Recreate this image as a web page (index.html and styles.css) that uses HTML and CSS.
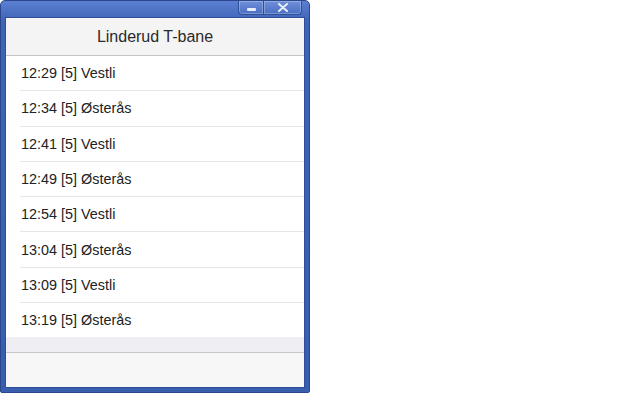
FILE: index.html
```html
<!DOCTYPE html>
<html>
<head>
<meta charset="utf-8">
<link rel="stylesheet" href="styles.css">
</head>
<body>
<div class="window">
  <div class="titlebar">
    <div class="controls">
      <div class="btn btn-min"><span class="min-glyph"></span></div>
      <div class="btn btn-close">
        <svg width="12" height="9" viewBox="0 0 12 9"><path d="M2 1 L10 8 M10 1 L2 8" stroke="#e8eef9" stroke-width="2" stroke-linecap="round"/></svg>
      </div>
    </div>
  </div>
  <div class="client">
    <div class="header">Linderud T-bane</div>
    <ul class="list">
      <li class="row">12:29 [5] Vestli</li>
      <li class="row">12:34 [5] Østerås</li>
      <li class="row">12:41 [5] Vestli</li>
      <li class="row">12:49 [5] Østerås</li>
      <li class="row">12:54 [5] Vestli</li>
      <li class="row">13:04 [5] Østerås</li>
      <li class="row">13:09 [5] Vestli</li>
      <li class="row">13:19 [5] Østerås</li>
    </ul>
    <div class="band"></div>
    <div class="footer"></div>
  </div>
</div>
</body>
</html>
```
FILE: styles.css
```css
html, body {
  margin: 0;
  padding: 0;
  background: #ffffff;
}
body {
  width: 640px;
  height: 400px;
  font-family: "Liberation Sans", Arial, sans-serif;
}
.window {
  width: 310px;
  height: 393px;
  box-sizing: border-box;
  display: flex;
  flex-direction: column;
  background: linear-gradient(#5b80d2, #3f63b6 20px, #3a5eae);
  border: 1px solid #2b478c;
  border-radius: 5px 5px 2px 2px;
  padding: 0 4px 4px 4px;
}
.titlebar {
  height: 16px;
  flex: none;
  display: flex;
  justify-content: flex-end;
}
.controls {
  display: flex;
  margin-right: 3px;
}
.btn {
  height: 13px;
  display: flex;
  align-items: center;
  justify-content: center;
  background: linear-gradient(#6f90da, #4a6ec2);
  border: 1px solid #2f4e98;
  border-top: none;
  box-shadow: inset 0 0 0 1px rgba(255,255,255,0.25);
}
.btn-min {
  width: 24px;
  border-radius: 0 0 0 4px;
}
.btn-close {
  width: 37px;
  border-left: none;
  border-radius: 0 0 4px 0;
}
.min-glyph {
  width: 9px;
  height: 3px;
  margin-top: 4px;
  background: #e8eef9;
  border-radius: 1px;
}
.client {
  flex: 1;
  display: flex;
  flex-direction: column;
  background: #ffffff;
  border: 1px solid #2f4e98;
}
.header {
  height: 37px;
  flex: none;
  display: flex;
  align-items: center;
  justify-content: center;
  background: #f4f4f4;
  border-bottom: 1px solid #c6c6c6;
  font-size: 16px;
  color: #2a2a2a;
}
.list {
  list-style: none;
  margin: 0;
  padding: 0;
}
.row {
  height: 34.3px;
  margin-left: 14px;
  border-bottom: 1px solid #e6e6e6;
  display: flex;
  align-items: center;
  padding-left: 1px;
  font-size: 14.4px;
  color: #222222;
}
.row:last-child {
  border-bottom: none;
}
.band {
  height: 15px;
  flex: none;
  background: #efeff3;
  border-bottom: 1px solid #c9c9c9;
}
.footer {
  flex: 1;
  background: #f7f7f7;
}
```
